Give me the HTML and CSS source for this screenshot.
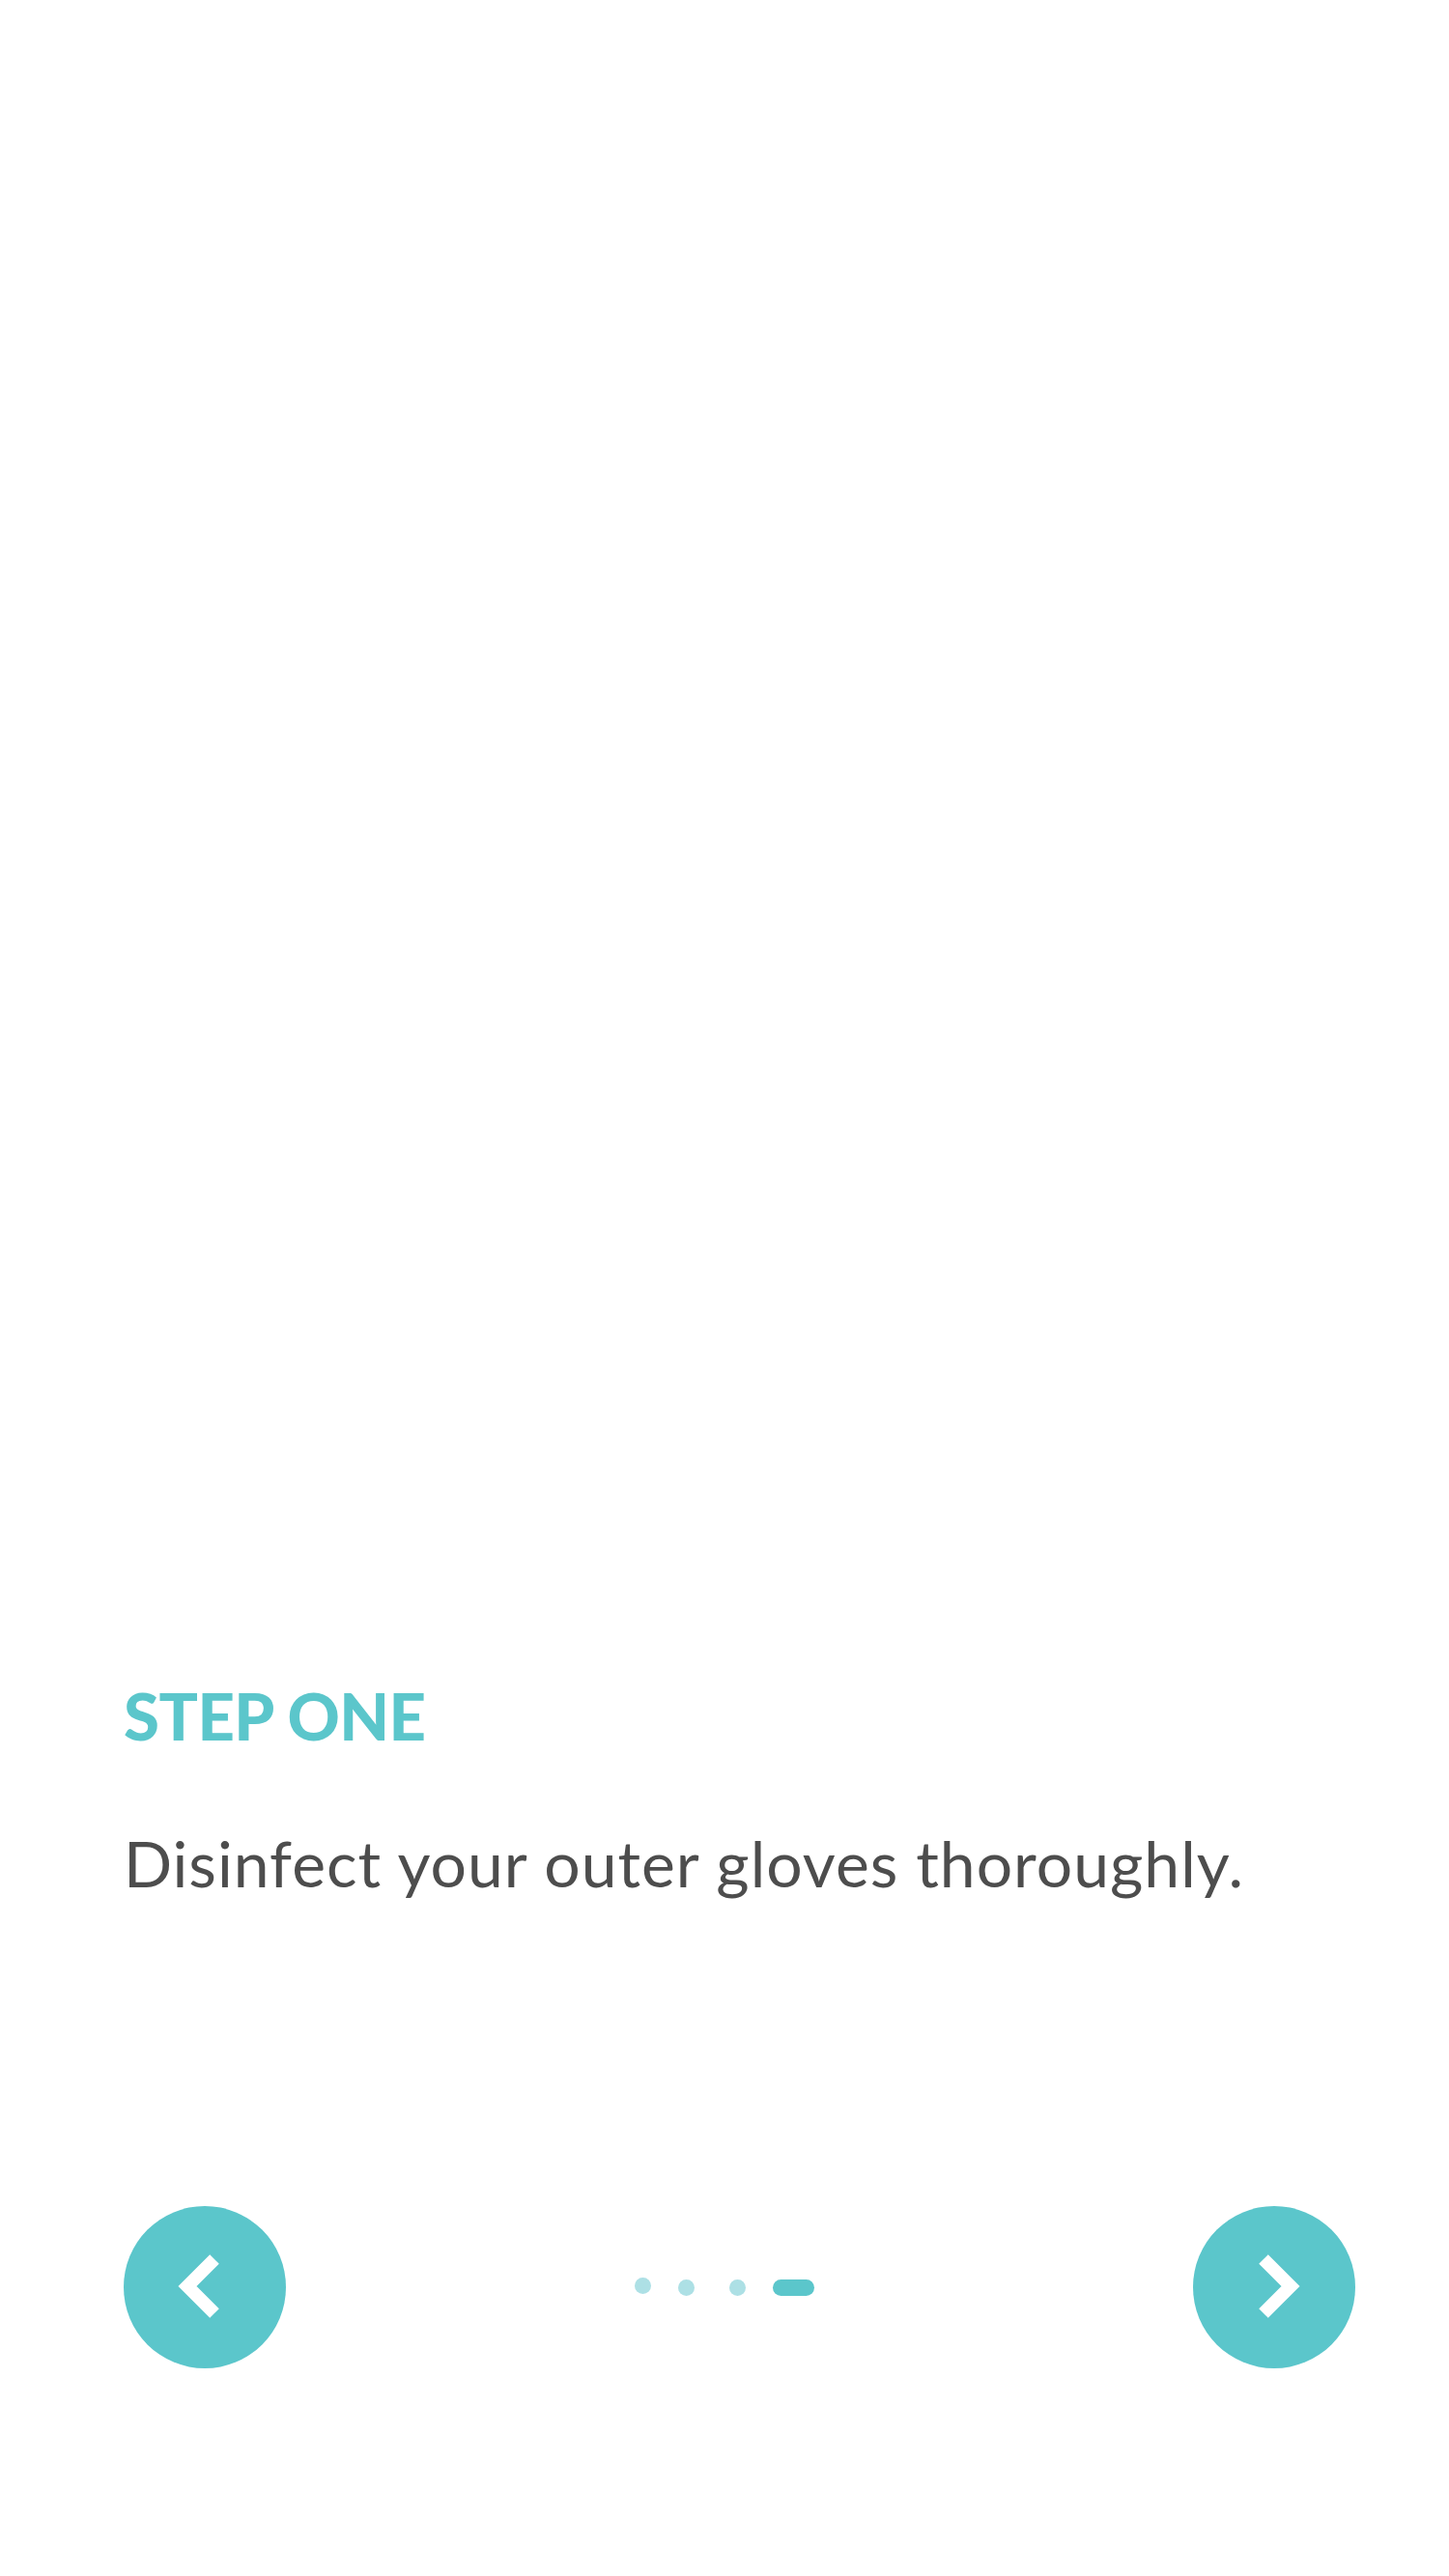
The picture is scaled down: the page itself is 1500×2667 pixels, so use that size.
FILE: index.html
```html
<!DOCTYPE html>
<html lang="en">
<head>
<meta charset="utf-8">
<title>Step one</title>
<link rel="stylesheet" href="styles.css">
</head>
<body>
<main class="screen">
  <div class="illustration"></div>
  <h2 class="step-title">STEP ONE</h2>
  <p class="step-text">Disinfect your outer gloves thoroughly.</p>
  <nav class="pager">
    <button class="nav-btn nav-prev" aria-label="Previous">
      <svg viewBox="0 0 168 168" width="168" height="168"><path d="M94 55 L66 83 L94 111" fill="none" stroke="#fff" stroke-width="13.5" stroke-linejoin="miter" stroke-linecap="butt"/></svg>
    </button>
    <div class="dots">
      <span class="dot dot-first"></span>
      <span class="dot"></span>
      <span class="dot dot-wide-gap"></span>
      <span class="dot active"></span>
    </div>
    <button class="nav-btn nav-next" aria-label="Next">
      <svg viewBox="0 0 168 168" width="168" height="168"><path d="M73 55 L101 83 L73 111" fill="none" stroke="#fff" stroke-width="13.5" stroke-linejoin="miter" stroke-linecap="butt"/></svg>
    </button>
  </nav>
</main>
</body>
</html>
```

FILE: styles.css
```css
* { box-sizing: border-box; }
html, body { margin: 0; padding: 0; background: #ffffff; }
.screen {
  width: 1500px;
  height: 2667px;
  display: flex;
  flex-direction: column;
  padding: 0 97px 0 128px;
}
.illustration { height: 1736px; flex-shrink: 0; }
.step-title {
  margin: 0;
  font-family: "Lato", "Liberation Sans", sans-serif;
  font-weight: 900;
  font-size: 67px;
  line-height: 80px;
  letter-spacing: -0.5px;
  color: #5bc6cb;
}
.step-text {
  margin: 73px 0 0;
  font-family: "Lato", "Liberation Sans", sans-serif;
  font-weight: 400;
  font-size: 66px;
  line-height: 80px;
  letter-spacing: 1px;
  color: #4d4d4d;
}
.pager {
  margin: 315px -97px 0 -128px;
  padding: 0 97px;
  display: grid;
  grid-template-columns: 1fr auto 1fr;
  align-items: center;
}
.nav-btn {
  width: 168px;
  height: 168px;
  border: 0;
  padding: 0;
  border-radius: 50%;
  background: #5bc6cb;
  display: flex;
  align-items: center;
  justify-content: center;
}
.nav-prev { justify-self: start; margin-left: 31px; }
.nav-next { justify-self: end; }
.nav-btn svg { display: block; }
.dots { display: flex; align-items: center; justify-self: center; }
.dot {
  width: 17px;
  height: 17px;
  border-radius: 9px;
  background: #ade0e5;
}
.dot + .dot { margin-left: 28px; }
.dot.dot-first { margin-bottom: 3px; }
.dot.dot-wide-gap { margin-left: 36px; }
.dot.active { width: 43px; background: #5bc6cb; }
```
